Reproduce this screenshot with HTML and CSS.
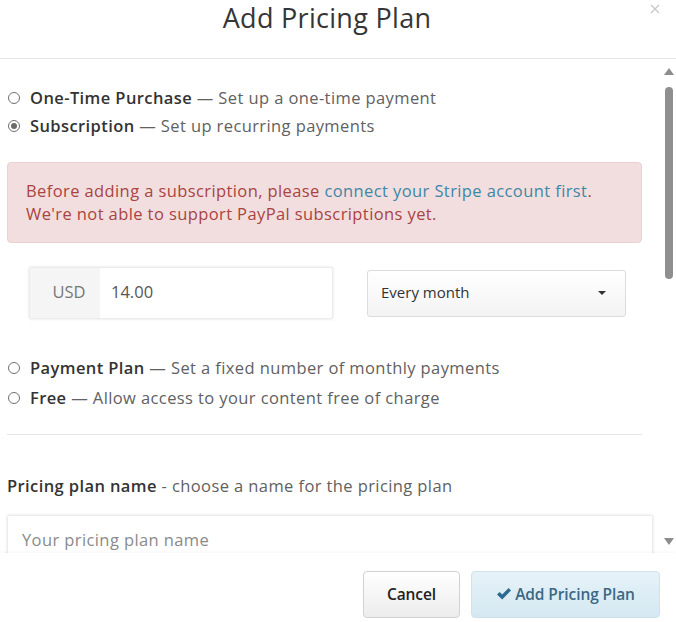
FILE: index.html
```html
<!DOCTYPE html>
<html lang="en">
<head>
<meta charset="utf-8">
<title>Add Pricing Plan</title>
<link rel="stylesheet" href="styles.css">
</head>
<body>
<div class="modal">
  <div class="modal-header">
    <h1 class="modal-title">Add Pricing Plan</h1>
    <span class="close" aria-label="Close">
      <svg width="10" height="10" viewBox="0 0 10 10"><path d="M1 1 L9 9 M9 1 L1 9" stroke="#c8c8c8" stroke-width="1.3" fill="none"/></svg>
    </span>
  </div>
  <div class="modal-scroll">
    <div class="modal-body">
      <div class="options">
        <label class="option"><span class="radio"></span><span><b>One-Time Purchase</b> — Set up a one-time payment</span></label>
        <label class="option"><span class="radio checked"></span><span><b>Subscription</b> — Set up recurring payments</span></label>
      </div>
      <div class="alert">Before adding a subscription, please <a class="alert-link" href="#">connect your Stripe account first</a>.<br>We're not able to support PayPal subscriptions yet.</div>
      <div class="price-row">
        <div class="input-group">
          <span class="addon">USD</span>
          <span class="amount">14.00</span>
        </div>
        <div class="select">
          <span>Every month</span>
          <span class="caret"></span>
        </div>
      </div>
      <div class="options options-lower">
        <label class="option"><span class="radio"></span><span><b>Payment Plan</b> — Set a fixed number of monthly payments</span></label>
        <label class="option"><span class="radio"></span><span><b>Free</b> — Allow access to your content free of charge</span></label>
      </div>
      <div class="divider"></div>
      <div class="field-label"><b>Pricing plan name</b> - choose a name for the pricing plan</div>
      <div class="text-input">Your pricing plan name</div>
    </div>
    <div class="scrollbar">
      <span class="arrow up"></span>
      <span class="thumb"></span>
      <span class="track"></span>
      <span class="arrow down"></span>
    </div>
  </div>
  <div class="modal-footer">
    <button class="btn btn-default">Cancel</button>
    <button class="btn btn-primary"><svg class="check" width="16" height="14" viewBox="0 0 16 14"><path d="M1 7.5 L3.6 5 L6.2 7.6 L12.6 1 L15 3.4 L6.2 12.4 Z" fill="#2d6c90"/></svg>Add Pricing Plan</button>
  </div>
</div>
</body>
</html>
```

FILE: styles.css
```css
* { box-sizing: border-box; }
html, body { margin: 0; padding: 0; background: #fff; }
body {
  font-family: "Open Sans", "Liberation Sans", Arial, sans-serif;
  color: #333;
}
.modal {
  width: 676px;
  height: 622px;
  display: flex;
  flex-direction: column;
  overflow: hidden;
  background: #fff;
}
.modal-header {
  height: 59px;
  flex: none;
  border-bottom: 1px solid #e6e6e6;
  display: flex;
  justify-content: center;
  position: relative;
  padding-right: 22px;
}
.modal-title {
  margin: 0;
  padding-top: 2px;
  font-size: 27px;
  font-weight: 400;
  line-height: 32px;
  color: #363636;
  letter-spacing: 0.3px;
}
.close {
  position: absolute;
  top: 4px;
  right: 16px;
  line-height: 0;
}
.modal-scroll {
  flex: 1;
  display: flex;
  overflow: hidden;
}
.modal-body {
  width: 662px;
  min-width: 0;
  flex: none;
  padding: 25px 20px 0 7px;
  font-size: 16.5px;
  color: #616161;
  letter-spacing: 0.4px;
}
.options { display: flex; flex-direction: column; }
.option {
  display: flex;
  align-items: center;
  gap: 10px;
  line-height: 28px;
  padding-left: 1px;
}
.option b { color: #333; font-weight: 600; }
.options-lower { margin-top: 34px; }
.options-lower .option { line-height: 30px; }
.radio {
  width: 12px;
  height: 12px;
  border: 1px solid #707070;
  border-radius: 50%;
  flex: none;
  display: flex;
  align-items: center;
  justify-content: center;
  background: #fff;
}
.radio.checked::after {
  content: "";
  width: 6px;
  height: 6px;
  border-radius: 50%;
  background: #6a6a6a;
}
.alert {
  margin-top: 22px;
  background: #f2dede;
  border: 1px solid #ebd0d4;
  border-radius: 4px;
  color: #a94442;
  padding: 16px 18px 17px;
  line-height: 23px;
}
.alert-link { color: #3e87a8; text-decoration: none; }
.price-row {
  margin-top: 24px;
  padding-left: 22px;
  display: flex;
  align-items: center;
  letter-spacing: 0;
}
.input-group {
  width: 304px;
  height: 52px;
  display: flex;
  border: 1px solid #ececec;
  box-shadow: 0 0 3px rgba(0,0,0,0.12);
  border-radius: 2px;
  background: #fff;
}
.addon {
  width: 70px;
  background: #f5f5f5;
  color: #777;
  display: flex;
  align-items: center;
  justify-content: center;
  padding: 0 0 3px 8px;
}
.amount {
  display: flex;
  align-items: center;
  padding: 0 0 3px 11px;
  color: #555;
}
.select {
  margin-left: 34px;
  width: 259px;
  height: 47px;
  border: 1px solid #dcdcdc;
  border-radius: 3px;
  background: linear-gradient(#ffffff, #f3f3f3);
  display: flex;
  align-items: center;
  justify-content: space-between;
  padding: 0 19px 3px 13px;
  color: #333;
  font-size: 15px;
}
.caret {
  width: 0;
  height: 0;
  border-left: 4.5px solid transparent;
  border-right: 4.5px solid transparent;
  border-top: 4.5px solid #333;
  margin-top: 3px;
}
.divider {
  margin-top: 21px;
  border-top: 1px solid #e6e6e6;
}
.field-label {
  margin-top: 39px;
  line-height: 24px;
  color: #616161;
}
.field-label b { color: #333; font-weight: 600; }
.text-input {
  margin-top: 17px;
  width: 646px;
  height: 52px;
  border: 1px solid #ececec;
  box-shadow: 0 0 3px rgba(0,0,0,0.12);
  border-radius: 2px;
  padding: 12px 14px;
  line-height: 24px;
  color: #8a8a8a;
}
.scrollbar {
  width: 14px;
  flex: none;
  display: flex;
  flex-direction: column;
  align-items: center;
  padding: 8px 0 8px;
  background: #fff;
}
.arrow {
  width: 0;
  height: 0;
  border-left: 5px solid transparent;
  border-right: 5px solid transparent;
  flex: none;
}
.arrow.up { border-bottom: 7px solid #8d8d8d; margin-top: 1px; }
.arrow.down { border-top: 7px solid #8d8d8d; }
.thumb {
  margin-top: 12px;
  width: 8px;
  height: 192px;
  border-radius: 4px;
  background: #8f8f8f;
  flex: none;
}
.track { flex: 1; }
.modal-footer {
  height: 69px;
  flex: none;
  display: flex;
  justify-content: flex-end;
  align-items: flex-start;
  gap: 11px;
  padding: 18px 16px 0 0;
  background: #fff;
  box-shadow: 0 -1px 3px rgba(0,0,0,0.04);
  position: relative;
}
.btn {
  height: 47px;
  border-radius: 4px;
  font-family: inherit;
  font-size: 15.5px;
  font-weight: 600;
  display: flex;
  align-items: center;
  justify-content: center;
  cursor: pointer;
  letter-spacing: -0.1px;
  padding-bottom: 2px;
}
.btn-default {
  width: 97px;
  border: 1px solid #d2d2d2;
  background: linear-gradient(#ffffff, #ececec);
  color: #222;
}
.btn-primary {
  width: 189px;
  border: 1px solid #cfe3ee;
  background: linear-gradient(#e6f2f8, #d5e8f2);
  color: #3b6884;
  gap: 3px;
}
.check { flex: none; margin-top: -1px; }
```
